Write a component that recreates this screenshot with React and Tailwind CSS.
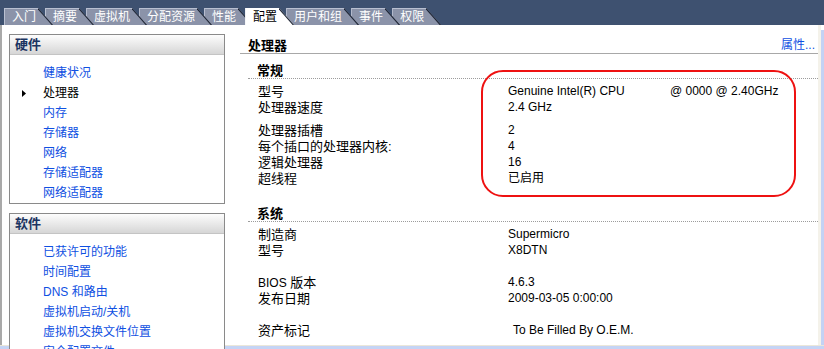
import React from 'react'

const tabs = [
  { label: '入门', z: 'z-[9]' },
  { label: '摘要', z: 'z-[8]' },
  { label: '虚拟机', z: 'z-[7]' },
  { label: '分配资源', z: 'z-[6]' },
  { label: '性能', z: 'z-[5]' },
  { label: '配置', z: 'z-[10]', active: true },
  { label: '用户和组', z: 'z-[4]' },
  { label: '事件', z: 'z-[3]' },
  { label: '权限', z: 'z-[2]' },
]

const hardware = ['健康状况', '处理器', '内存', '存储器', '网络', '存储适配器', '网络适配器']
const software = ['已获许可的功能', '时间配置', 'DNS 和路由', '虚拟机启动/关机', '虚拟机交换文件位置', '安全配置文件']

const general = [
  {
    label: '型号',
    value: (
      <>
        <span className="inline-block w-[162px]">Genuine Intel(R) CPU</span>
        <span>@ 0000 @ 2.40GHz</span>
      </>
    ),
  },
  { label: '处理器速度', value: '2.4 GHz' },
  { gap: 'h-[7px]' },
  { label: '处理器插槽', value: '2' },
  { label: '每个插口的处理器内核:', value: '4' },
  { label: '逻辑处理器', value: '16' },
  { label: '超线程', value: '已启用' },
]

const system = [
  { label: '制造商', value: 'Supermicro' },
  { label: '型号', value: 'X8DTN' },
  { gap: 'h-[16px]' },
  { label: <><span className="text-[12px]">BIOS</span> 版本</>, value: '4.6.3' },
  { label: '发布日期', value: '2009-03-05 0:00:00' },
  { gap: 'h-[16px]' },
  { label: '资产标记', value: <span className="pl-[5px]">To Be Filled By O.E.M.</span> },
]

function Tab({ tab }) {
  return (
    <div
      className={`relative h-[17px] flex items-center pl-[8px] pr-[17px] -mr-[8px] text-[12px] leading-none [clip-path:polygon(0_0,calc(100%_-_15px)_0,100%_100%,0_100%)] ${tab.z} ${
        tab.active ? 'bg-white text-black' : 'bg-[#8b93a9] text-white shadow-[inset_1px_1px_0_#b9c0d1]'
      }`}
    >
      {tab.label}
      <svg className="absolute right-0 top-0" width="15" height="17" viewBox="0 0 15 17">
        <line x1="0" y1="0" x2="15" y2="17" stroke="#1d2433" strokeWidth="2" />
      </svg>
    </div>
  )
}

function Panel({ title, items, current, className }) {
  return (
    <div className={`border border-[#8a8a8a] bg-white ${className}`}>
      <div className="h-[20px] flex items-center pl-[5px] border-b border-[#c4c4c4] bg-gradient-to-b from-[#fdfdfd] to-[#d6d6d6] text-[13px] font-bold text-[#1b3461]">
        {title}
      </div>
      <div className="pt-[8px]">
        {items.map(item => (
          <div key={item} className="h-[20px] flex items-center pl-[12px] text-[12px]">
            <div className="w-[21px] flex items-center">
              {item === current && (
                <svg width="4" height="7" viewBox="0 0 4 7">
                  <polygon points="0,0 4,3.5 0,7" fill="#000" />
                </svg>
              )}
            </div>
            <span className={item === current ? 'text-black' : 'text-[#0f50e2]'}>{item}</span>
          </div>
        ))}
      </div>
    </div>
  )
}

function Rows({ rows }) {
  return (
    <div className="pt-[4px]">
      {rows.map((row, i) =>
        row.gap ? (
          <div key={i} className={row.gap} />
        ) : (
          <div key={i} className="h-[16px] flex items-center text-black">
            <div className="w-[260px] pl-[10px] text-[13px]">{row.label}</div>
            <div className="text-[12px] whitespace-nowrap">{row.value}</div>
          </div>
        )
      )}
    </div>
  )
}

export default function App() {
  return (
    <div className="relative w-[824px] h-[349px] overflow-hidden bg-white font-['Liberation_Sans','Noto_Sans_CJK_SC',sans-serif] leading-none">
      {/* Tabs */}
      <div className="h-[25px] bg-[#3e5170] flex items-end pl-[4px]">
        {tabs.map(tab => (
          <Tab key={tab.label} tab={tab} />
        ))}
      </div>

      <div className="flex h-[320px]">
        <div className="w-[2px] bg-[#a9a9a9]" />

        {/* Left navigation */}
        <div className="w-[223px] pl-[7px] pt-[9px] flex flex-col">
          <Panel title="硬件" items={hardware} current="处理器" className="h-[170px]" />
          <Panel title="软件" items={software} className="mt-[9px] flex-1 border-b-0" />
        </div>

        {/* Content */}
        <div className="w-[593px] pl-[15px] pt-[12px]">
          <div className="h-[17px] flex items-center justify-between pl-[8px] pr-[3px] border-b border-[#a8a8a8]">
            <span className="text-[13px] font-bold text-black">处理器</span>
            <span className="text-[12px] text-[#0f50e2]">属性...</span>
          </div>

          <div className="ml-[8px] mt-[8px]">
            <div className="h-[17px] flex items-center pl-[9px] border-b border-dotted border-[#9c9c9c] text-[13px] font-bold text-black">
              常规
            </div>
            <Rows rows={general} />

            <div className="mt-[19px] h-[17px] flex items-center pl-[9px] border-b border-dotted border-[#9c9c9c] text-[13px] font-bold text-black">
              系统
            </div>
            <Rows rows={system} />
          </div>
        </div>

        <div className="flex-1 flex">
          <div className="w-[3px] bg-[#f4f2ea]" />
          <div className="flex-1 mt-[5px] bg-[#c3d2f4]" />
        </div>
      </div>

      {/* Bottom scrollbar edge */}
      <div className="h-[4px] border-t border-[#ebe7da] bg-[#c5d4f5]" />

      {/* Annotation */}
      <div className="absolute left-[481px] top-[70px] w-[315px] h-[127px] border-2 border-[#ee1111] rounded-[22px]" />
    </div>
  )
}
